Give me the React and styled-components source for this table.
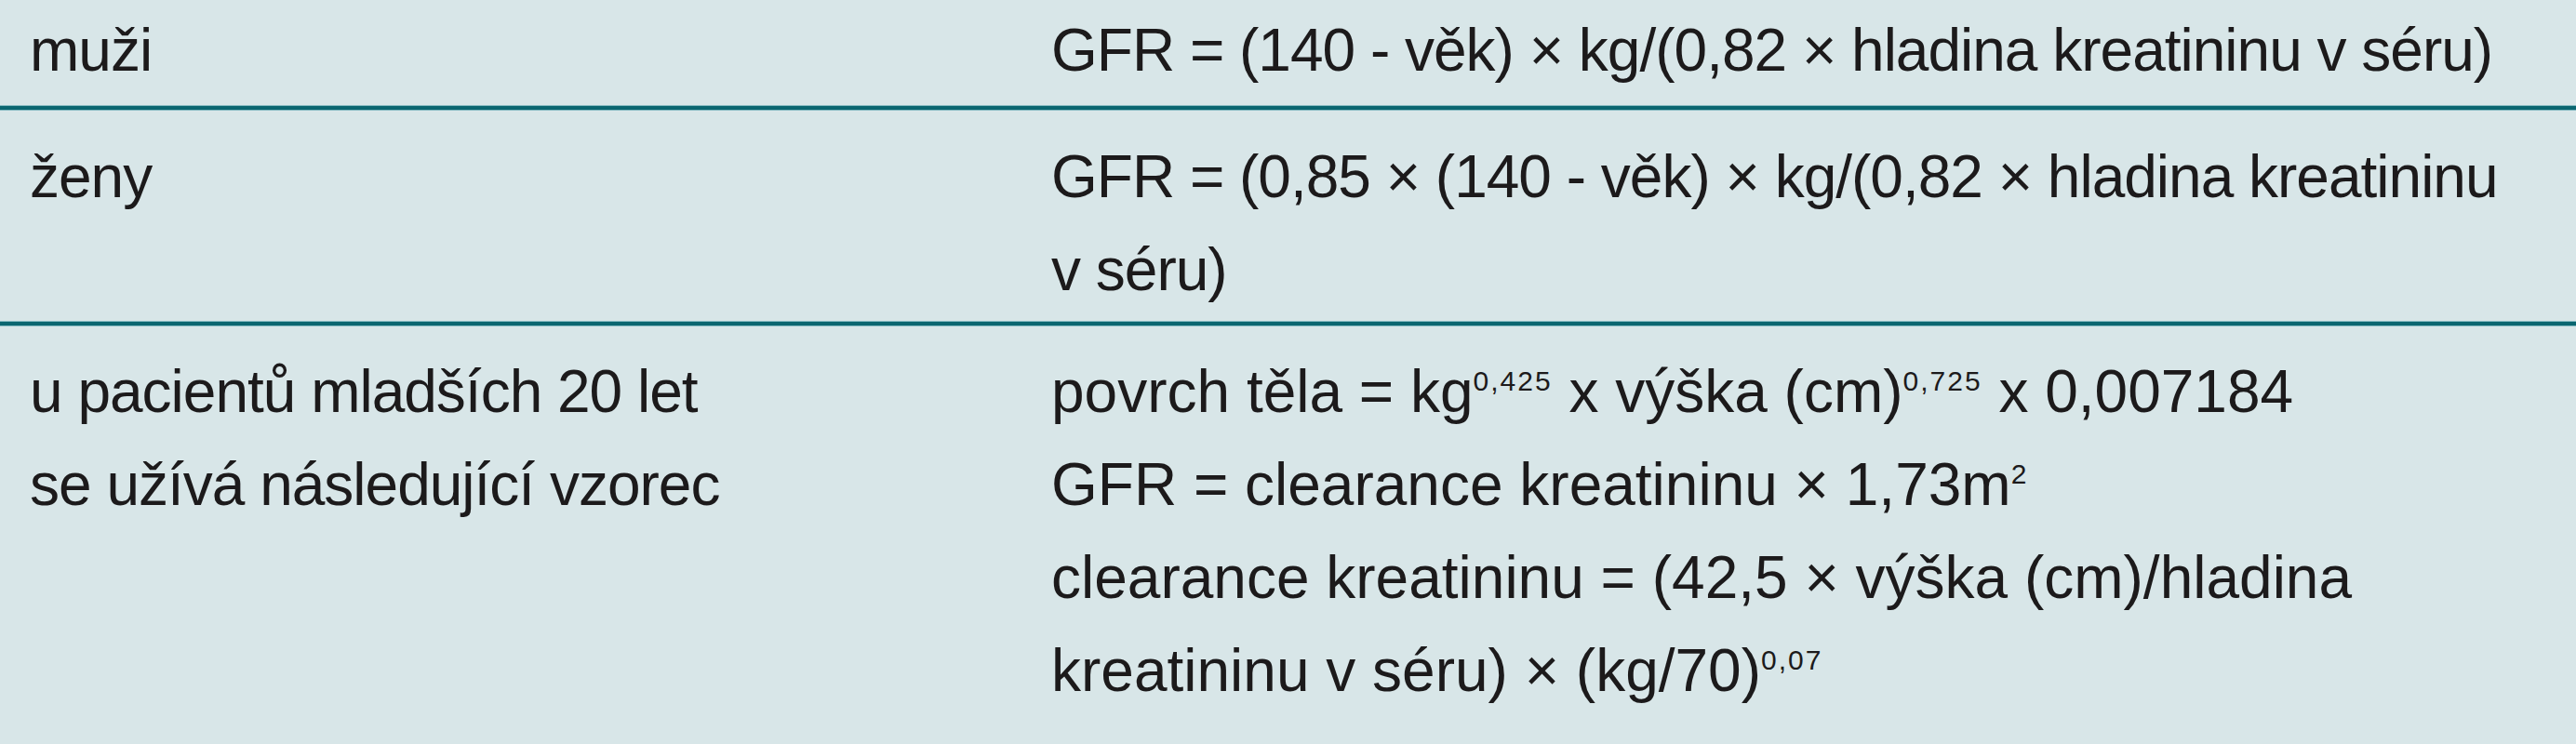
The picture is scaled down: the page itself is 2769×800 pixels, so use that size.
import React from 'react';
import styled, { createGlobalStyle } from 'styled-components';

const GlobalStyle = createGlobalStyle`
  html, body {
    margin: 0;
    padding: 0;
    background: #d8e6e8;
  }
`;

const rows = [
  {
    label: ['muži'],
    formula: [['GFR = (140 - věk) × kg/(0,82 × hladina kreatininu v séru)']],
  },
  {
    label: ['ženy'],
    formula: [
      ['GFR = (0,85 × (140 - věk) × kg/(0,82 × hladina kreatininu'],
      ['v séru)'],
    ],
  },
  {
    label: ['u pacientů mladších 20 let', 'se užívá následující vzorec'],
    wide: true,
    formula: [
      ['povrch těla = kg', { sup: '0,425' }, ' x výška (cm)', { sup: '0,725' }, ' x 0,007184'],
      ['GFR = clearance kreatininu × 1,73m', { sup: '2' }],
      ['clearance kreatininu = (42,5 × výška (cm)/hladina'],
      ['kreatininu v séru) × (kg/70)', { sup: '0,07' }],
    ],
  },
];

const Table = styled.div`
  display: flex;
  flex-direction: column;
  width: 2769px;
  height: 800px;
  background: #d8e6e8;
  color: #1c1a1b;
  font-family: "Liberation Sans", Arial, sans-serif;
  font-size: 64px;
  letter-spacing: -1px;
  line-height: 100px;
  overflow: hidden;
`;

const Row = styled.div`
  display: grid;
  grid-template-columns: 1098px 1fr;
  padding: ${(p) => p.$pad};
  padding-left: 32px;
`;

const Divider = styled.div`
  height: 4px;
  background: #0a6670;
  border-top: 1px solid #86bac1;
  border-bottom: 1px solid #86bac1;
`;

const Cell = styled.div`
  display: flex;
  flex-direction: column;
  white-space: nowrap;
  letter-spacing: ${(p) => (p.$wide ? '0' : '-1px')};
`;

const Line = styled.span`
  display: block;
`;

const Sup = styled.sup`
  font-size: 30px;
  line-height: 1;
  letter-spacing: 2px;
  vertical-align: 23px;
`;

const pads = ['4px 0 9px', '21px 0 5px', '20px 0 29px'];

const renderLine = (parts, i) => (
  <Line key={i}>
    {parts.map((p, j) =>
      typeof p === 'string' ? <React.Fragment key={j}>{p}</React.Fragment> : <Sup key={j}>{p.sup}</Sup>
    )}
  </Line>
);

const App = () => (
  <>
    <GlobalStyle />
    <Table>
      {rows.map((row, i) => (
        <React.Fragment key={i}>
          {i > 0 && <Divider />}
          <Row $pad={pads[i]}>
            <Cell>
              {row.label.map((l, k) => (
                <Line key={k}>{l}</Line>
              ))}
            </Cell>
            <Cell $wide={row.wide}>{row.formula.map(renderLine)}</Cell>
          </Row>
        </React.Fragment>
      ))}
    </Table>
  </>
);

export default App;
